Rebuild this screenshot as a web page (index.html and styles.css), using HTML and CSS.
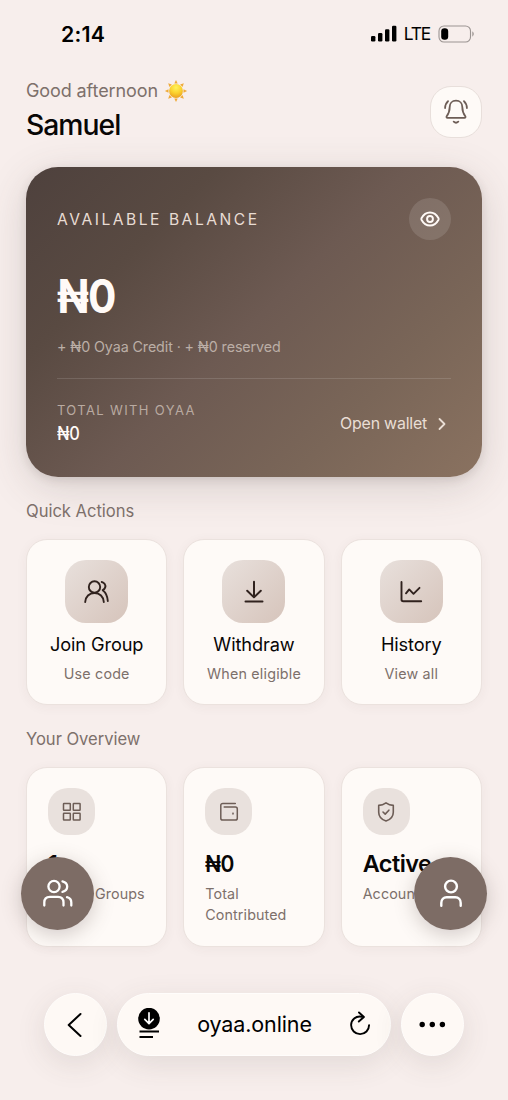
FILE: index.html
```html
<!DOCTYPE html>
<html lang="en">
<head>
<meta charset="utf-8">
<title>Oyaa</title>
<link rel="stylesheet" href="styles.css">
</head>
<body>
<div class="screen">
  <div class="status">
    <span class="time">2:14</span>
    <div class="status-right">
      <svg width="26" height="17" viewBox="0 0 26 17"><rect x="0" y="11" width="4.4" height="5.5" rx="1.2"/><rect x="7" y="8" width="4.4" height="8.5" rx="1.2"/><rect x="14" y="4.2" width="4.4" height="12.3" rx="1.2"/><rect x="21" y="0.8" width="4.4" height="15.7" rx="1.2"/></svg>
      <span class="lte">LTE</span>
      <svg width="37" height="18" viewBox="0 0 37 18"><rect x="1" y="1" width="31.5" height="16" rx="5" fill="none" stroke="#9b9492" stroke-width="1.1"/><rect x="3.2" y="3.2" width="7" height="11.6" rx="3.2"/><path d="M34.3 6.3q3 2.7 0 5.4z" fill="#9b9492"/></svg>
    </div>
  </div>
  <header class="header">
    <div>
      <div class="greeting"><span>Good afternoon</span>
        <svg width="24" height="24" viewBox="0 0 24 24"><defs><radialGradient id="sun" cx=".5" cy=".25" r=".8"><stop offset="0" stop-color="#fff35a"/><stop offset=".5" stop-color="#fbd22e"/><stop offset="1" stop-color="#e99a20"/></radialGradient></defs><g fill="#efaa39"><path id="ray" d="M12 .9l1.700 3.600h-3.400z"/><use href="#ray" transform="rotate(45 12 12)"/><use href="#ray" transform="rotate(90 12 12)"/><use href="#ray" transform="rotate(135 12 12)"/><use href="#ray" transform="rotate(180 12 12)"/><use href="#ray" transform="rotate(225 12 12)"/><use href="#ray" transform="rotate(270 12 12)"/><use href="#ray" transform="rotate(315 12 12)"/></g><circle cx="12" cy="12" r="6.900" fill="url(#sun)"/></svg>
      </div>
      <div class="name">Samuel</div>
    </div>
    <div class="bell"><svg class="line" width="28" height="28" viewBox="0 0 28 28" stroke-width="1.800"><path d="M14 3.700c-4 0-6.300 2.800-6.300 6.300 0 5-1.200 6.800-3 9.200-.5.8-.1 1.700.8 1.700h17c.9 0 1.300-.9.8-1.700-1.800-2.400-3-4.200-3-9.200 0-3.500-2.300-6.300-6.300-6.300z"/><path d="M11.700 24.600q2.300 2.200 4.600 0M6 4.200Q3.300 6.500 3.100 11M22 4.200q2.700 2.300 2.900 6.800"/></svg></div>
  </header>

  <section class="balance">
    <div class="row">
      <span class="eyebrow">AVAILABLE BALANCE</span>
      <div class="eye"><svg class="line" width="22" height="22" viewBox="0 0 24 24" stroke-width="2.100"><path d="M2.700 12.800a2 2 0 0 1 0-1.600C5 6.900 8.300 4.900 12 4.900s7 2 9.300 6.300a2 2 0 0 1 0 1.600C19 17.100 15.700 19.100 12 19.100s-7-2-9.300-6.300z"/><circle cx="12" cy="12" r="3.200"/></svg></div>
    </div>
    <div class="amount money">₦0</div>
    <div class="credit">+ ₦0 Oyaa Credit · + ₦0 reserved</div>
    <div class="row foot">
      <div>
        <div class="total-label">TOTAL WITH OYAA</div>
        <div class="total money">₦0</div>
      </div>
      <div class="open"><span>Open wallet</span><svg class="line" width="18" height="18" viewBox="0 0 18 18" stroke-width="1.800"><path d="M6.500 4l5 5-5 5"/></svg></div>
    </div>
  </section>

  <h2 class="title">Quick Actions</h2>
  <div class="grid actions">
    <div class="card action">
      <div class="tile"><svg class="line" width="28" height="28" viewBox="0 0 28 28" stroke-width="1.900"><circle cx="11.500" cy="9" r="5.700"/><path d="M2.200 24c.3-5.200 4-9 9.300-9s9 3.800 9.300 9M18.700 4c2.600.6 4.300 3.100 3.500 5.400-.4 1.300-1.500 2.300-2.500 2.800 2.900 2.200 4.800 6 5.100 10.800"/></svg></div>
      <div class="action-name">Join Group</div><div class="note">Use code</div>
    </div>
    <div class="card action">
      <div class="tile"><svg class="line" width="28" height="28" viewBox="0 0 28 28" stroke-width="2"><path d="M14 3.800v15.500M7.200 12.700l6.800 6.700 6.800-6.700M5.500 23.500h17"/></svg></div>
      <div class="action-name">Withdraw</div><div class="note">When eligible</div>
    </div>
    <div class="card action">
      <div class="tile"><svg class="line" width="28" height="28" viewBox="0 0 28 28" stroke-width="1.900"><path d="M4.500 3.900v17.700c0 1 .7 1.700 1.700 1.700h18M9 15.300l3.200-3.900 4.300 4.400 6-6"/></svg></div>
      <div class="action-name">History</div><div class="note">View all</div>
    </div>
  </div>

  <h2 class="title">Your Overview</h2>
  <div class="grid overview">
    <div class="card stat">
      <div class="chip"><svg class="line" width="22" height="22" viewBox="0 0 22 22" stroke-width="1.500"><rect x="2.500" y="2.500" width="6.800" height="6.800" rx=".5"/><rect x="12.300" y="2.500" width="6.800" height="6.800" rx=".5"/><rect x="2.500" y="12.300" width="6.800" height="6.800" rx=".5"/><rect x="12.300" y="12.300" width="6.800" height="6.800" rx=".5"/></svg></div>
      <div class="value">1</div><div class="stat-label">Active Groups</div>
    </div>
    <div class="card stat">
      <div class="chip"><svg class="line" width="22" height="22" viewBox="0 0 22 22" stroke-width="1.500"><path d="M17.300 2.500H4.800c-1.300 0-2 .7-2 1.700v13c0 1.300.6 1.900 1.900 1.900h12.700c1.300 0 1.900-.6 1.900-1.900V8c0-1.300-.6-1.900-1.900-1.900H6.200"/><circle cx="15" cy="12.600" r=".3"/></svg></div>
      <div class="value money">₦0</div><div class="stat-label">Total Contributed</div>
    </div>
    <div class="card stat">
      <div class="chip"><svg class="line" width="22" height="22" viewBox="0 0 22 22" stroke-width="1.600"><path d="M11 1.900c2.100 1.500 4.500 2.400 7.300 2.500v6.800c0 4.200-2.600 7.200-7.300 8.800-4.700-1.600-7.300-4.600-7.300-8.800V4.400C6.500 4.300 8.900 3.400 11 1.900z"/><path d="M8 11l2.200 2.100 3.700-3.900"/></svg></div>
      <div class="value">Active</div><div class="stat-label">Account</div>
    </div>
  </div>

  <div class="browser">
    <div class="round"><svg class="line" width="28" height="28" viewBox="0 0 28 28" stroke-width="2"><path d="M18.500 3L6.700 14l11.800 11"/></svg></div>
    <div class="address">
      <svg width="24" height="34" viewBox="0 0 24 34"><circle cx="12" cy="10.600" r="10.800"/><path d="M12 4.800v10.500M7.800 11.300l4.200 4.300 4.200-4.300" fill="none" stroke="#fff" stroke-width="1.700" stroke-linecap="round" stroke-linejoin="round"/><path d="M2.500 23.500h19.500M2.500 29h13.500" stroke="#000" stroke-width="1.900"/></svg>
      <span class="url">oyaa.online</span>
      <svg class="line" width="24" height="28" viewBox="0 0 24 28" stroke-width="1.900"><path d="M13.800 5.700C7.800 4.500 3.100 8.700 3.100 14.100c0 5 4 9 9 9s9-4 9-9"/><path d="M11 1.500l4.900 4.500-5.100 4.500"/></svg>
    </div>
    <div class="round"><svg width="28" height="8" viewBox="0 0 28 8"><circle cx="3.200" cy="3.500" r="2.700"/><circle cx="13.300" cy="3.500" r="2.700"/><circle cx="23.400" cy="3.500" r="2.700"/></svg></div>
  </div>

  <div class="fab fab-left"><svg class="line" width="32" height="32" viewBox="0 0 32 32" stroke-width="2.300"><circle cx="12" cy="8.500" r="5.600"/><path d="M2.300 27.500v-2.900c0-3.600 2.200-5.700 5.500-5.700h8.200c3.300 0 5.500 2.100 5.500 5.700v2.900M20.500 3.300c3 .8 4.700 2.700 4.700 5.300s-1.700 4.600-4.700 5.300M25 19.200c2.700.7 4.300 2.500 4.300 5.200v3.100"/></svg></div>
  <div class="fab fab-right"><svg class="line" width="32" height="32" viewBox="0 0 32 32" stroke-width="2.400"><circle cx="16" cy="8.500" r="5.900"/><path d="M6.300 27.800v-2.800c0-3.500 2.200-5.700 5.400-5.700h8.600c3.200 0 5.400 2.200 5.400 5.700v2.800"/></svg></div>
</div>
</body>
</html>
```
FILE: styles.css
```css
* { box-sizing: border-box; }
body { margin: 0; background: #f7eeec; font-family: Inter, "Liberation Sans", sans-serif; color: #080606; }
svg { display: block; flex: none; }
.line { fill: none; stroke: currentColor; stroke-linecap: round; stroke-linejoin: round; }
.screen { position: relative; width: 508px; height: 1100px; overflow: hidden; padding: 0 26px; background: #f7eeec; }
.status { height: 67px; display: flex; align-items: center; justify-content: space-between; padding: 0 7px 0 35px; color: #000; }
.time { font-size: 21.300px; font-weight: 600; letter-spacing: 0.200px; }
.status-right { display: flex; align-items: center; gap: 7px; }
.lte { font-size: 17.400px; letter-spacing: -1.200px; margin-right: 1px; }
.header { height: 100px; display: flex; justify-content: space-between; padding-top: 10px; }
.greeting { display: flex; align-items: center; height: 27px; gap: 6px; font-size: 18px; letter-spacing: -0.100px; color: #7d706b; }
.name { font-size: 28.300px; line-height: 42px; font-weight: 500; letter-spacing: -1px; }
.bell { width: 52px; height: 52px; margin-top: 9px; padding-bottom: 2px; border: 1.300px solid #e8dfdb; border-radius: 21px; background: #fefaf7; color: #6d5d56; display: grid; place-items: center; }
.balance { height: 310px; border-radius: 32px; padding: 31px; color: #fffaf7; background: linear-gradient(135deg, #4e413d 0%, #594a42 25%, #6d5a52 50%, #7a6658 75%, #8a7260 100%); box-shadow: 0 10px 42px rgba(78,65,61,.18), 0 3px 10px rgba(78,65,61,.14); }
.row { display: flex; align-items: center; justify-content: space-between; }
.eyebrow { font-size: 15.600px; letter-spacing: 2.520px; color: #e8dcd4; }
.eye { width: 42px; height: 42px; border-radius: 50%; background: rgba(255,255,255,.12); display: grid; place-items: center; }
.money { transform: scaleX(.9); transform-origin: left center; }
.amount { margin-top: 28px; height: 56px; line-height: 56px; font-size: 46.800px; font-weight: 700; letter-spacing: -1px; }
.credit { margin-top: 11px; height: 24px; line-height: 24px; font-size: 14.300px; letter-spacing: -0.100px; color: #bbaea6; }
.foot { margin-top: 19px; padding-top: 20px; border-top: 1px solid rgba(255,255,255,.13); align-items: flex-start; }
.total-label { font-size: 13px; line-height: 22px; letter-spacing: 1.360px; color: #b9aaa1; }
.total { font-size: 18.200px; line-height: 25px; font-weight: 500; letter-spacing: -0.200px; }
.open { display: flex; align-items: center; gap: 6px; padding: 12px 0 0; font-size: 15.900px; line-height: 26px; letter-spacing: -0.200px; color: #e9ded5; }
.title { margin: 0; height: 62px; padding-top: 20px; font-size: 16.600px; line-height: 28px; font-weight: 400; letter-spacing: -0.040px; color: #7d706b; }
.grid { display: grid; grid-template-columns: repeat(3, 1fr); gap: 16px; }
.card { border: 1.300px solid #ebe2de; border-radius: 21px; background: #fefaf7; box-shadow: 0 2px 12px rgba(78,65,61,.05); }
.action { height: 166px; padding-top: 20px; display: flex; flex-direction: column; align-items: center; }
.tile { width: 63px; height: 63px; border-radius: 21px; color: #30221e; background: linear-gradient(135deg, #e8e0dc, #d6c4bb); display: grid; place-items: center; }
.action-name { margin-top: 8px; font-size: 18.200px; line-height: 27px; letter-spacing: -0.100px; white-space: nowrap; }
.note { margin-top: 5px; font-size: 14.300px; line-height: 22px; letter-spacing: 0.200px; color: #7d706b; white-space: nowrap; }
.stat { height: 180px; padding: 20px 18px 20px 21px; }
.chip { width: 47px; height: 47px; border-radius: 20px; background: #e9e1dd; color: #6d5d56; display: grid; place-items: center; }
.value { margin-top: 12px; font-size: 23.400px; line-height: 34px; font-weight: 600; letter-spacing: -0.500px; }
.stat-label { margin-top: 2px; font-size: 14.300px; line-height: 21px; letter-spacing: 0.100px; color: #7d706b; }
.browser { margin: 46px 18px 0; display: flex; gap: 10px; color: #000; }
.round, .address { height: 63px; border: 1.500px solid #fffdfb; background: #fef9f5; box-shadow: 0 8px 30px rgba(78,65,61,.12); }
.round { width: 63px; border-radius: 50%; display: grid; place-items: center; }
.address { flex: 1; border-radius: 32px; padding: 0 18px 0 19px; display: flex; align-items: center; justify-content: space-between; }
.url { font-size: 21.500px; letter-spacing: -0.120px; padding-bottom: 1px; }
.fab { position: absolute; top: 857px; width: 73px; height: 73px; padding-top: 1px; border-radius: 50%; background: #7d6c65; color: #fff; display: grid; place-items: center; box-shadow: 0 5px 20px rgba(78,65,61,.25); }
.fab-left { left: 21px; }
.fab-right { left: 414px; }
```
